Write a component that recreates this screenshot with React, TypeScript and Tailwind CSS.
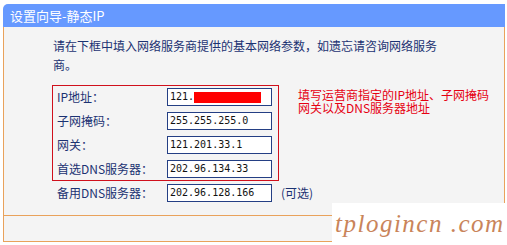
const cjk = "font-['Noto_Sans_CJK_SC','Noto_Sans',sans-serif]";

type Row = { label: string; value: string; masked?: boolean };

const rows: Row[] = [
  { label: "IP地址：", value: "121.", masked: true },
  { label: "子网掩码：", value: "255.255.255.0" },
  { label: "网关：", value: "121.201.33.1" },
  { label: "首选DNS服务器：", value: "202.96.134.33" },
];

function Field({ label, value, masked }: Row) {
  return (
    <div className="flex items-center h-[18px]">
      <span className={`w-[110px] text-[12px] leading-[18px] text-[#1b3272] ${cjk}`}>{label}</span>
      <div className="flex items-center w-[105px] h-[18px] border border-[#243f84] bg-white pl-[2px] font-['DejaVu_Sans_Mono',monospace] text-[10px] leading-[16px] text-[#111]">
        {value}
        {masked && <span className="inline-block w-[67px] h-[11px] bg-[#ff0000]" />}
      </div>
    </div>
  );
}

export default function App() {
  return (
    <div className="relative w-[507px] h-[245px] bg-white pt-[4px] pl-[3px]">
      <div className="w-[502px]">
        {/* 标题栏 */}
        <div className={`h-[23px] rounded-tl-[5px] bg-[#6699ff] pl-[7px] text-[13px] leading-[23px] text-white ${cjk}`}>
          设置向导-静态IP
        </div>

        {/* 内容 */}
        <div className="h-[189px] border-x border-b border-[#e9a25b] bg-[#f4f4f4] pl-[48px] pt-[9px]">
          <p className={`ml-[1px] w-[390px] text-[12px] leading-[19px] text-[#1b3272] ${cjk}`}>
            请在下框中填入网络服务商提供的基本网络参数，如遗忘请咨询网络服务商。
          </p>

          <div className="mt-[11px] flex">
            <div className="flex w-[227px] flex-col gap-[6px] border border-[#d0101c] py-[2px] pl-[4px]">
              {rows.map((r) => (
                <Field key={r.label} {...r} />
              ))}
            </div>
            <p className={`ml-[19px] mt-[3px] w-[200px] text-[12px] leading-[13px] text-[#e60012] ${cjk}`}>
              填写运营商指定的IP地址、子网掩码网关以及DNS服务器地址
            </p>
          </div>

          <div className="mt-[3px] flex items-center pl-[5px]">
            <Field label="备用DNS服务器：" value="202.96.128.166" />
            <span className={`ml-[9px] text-[12px] text-[#1b3272] ${cjk}`}>(可选)</span>
          </div>
        </div>

        {/* 底部 */}
        <div className="h-[26px] border-x border-b border-[#e9a25b] bg-[#f4f4f4]" />
      </div>

      {/* 水印 */}
      <div className="absolute right-0 bottom-0 flex h-[42px] w-[175px] items-center bg-white pl-[3px]">
        <span className="font-['Liberation_Serif',serif] text-[25px] italic tracking-[1.5px] text-[#c9845a]">
          tplogincn .com
        </span>
      </div>
    </div>
  );
}
